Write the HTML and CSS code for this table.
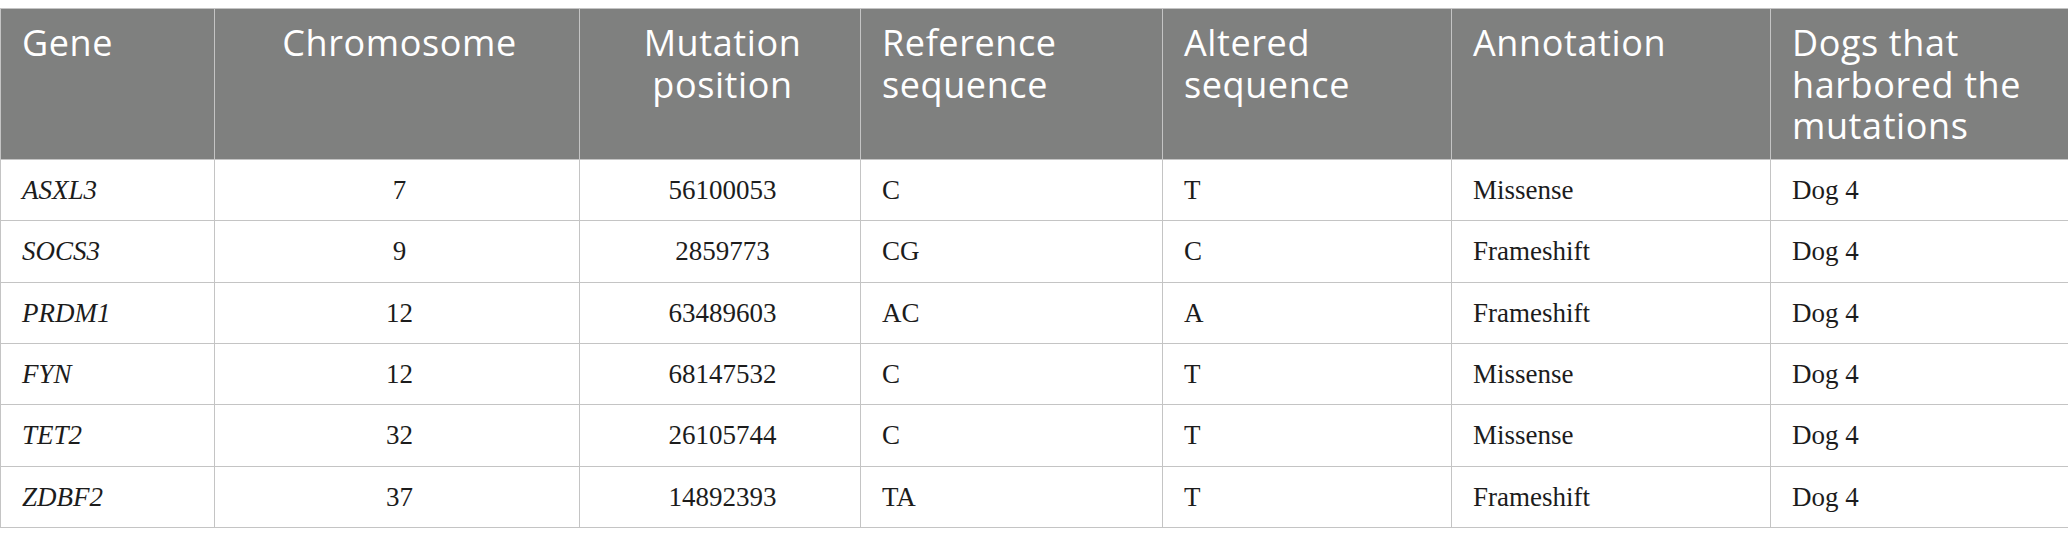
FILE: index.html
```html
<!DOCTYPE html>
<html lang="en">
<head>
<meta charset="utf-8">
<title>Mutations table</title>
<link rel="stylesheet" href="styles.css">
</head>
<body>
<table class="data-table">
  <colgroup>
    <col class="c-gene">
    <col class="c-chrom">
    <col class="c-pos">
    <col class="c-ref">
    <col class="c-alt">
    <col class="c-ann">
    <col class="c-dogs">
  </colgroup>
  <thead>
    <tr>
      <th>Gene</th>
      <th class="center">Chromosome</th>
      <th class="center">Mutation position</th>
      <th>Reference sequence</th>
      <th>Altered sequence</th>
      <th>Annotation</th>
      <th>Dogs that harbored the mutations</th>
    </tr>
  </thead>
  <tbody>
    <tr><td class="gene">ASXL3</td><td class="center">7</td><td class="center">56100053</td><td>C</td><td>T</td><td>Missense</td><td>Dog 4</td></tr>
    <tr><td class="gene">SOCS3</td><td class="center">9</td><td class="center">2859773</td><td>CG</td><td>C</td><td>Frameshift</td><td>Dog 4</td></tr>
    <tr><td class="gene">PRDM1</td><td class="center">12</td><td class="center">63489603</td><td>AC</td><td>A</td><td>Frameshift</td><td>Dog 4</td></tr>
    <tr><td class="gene">FYN</td><td class="center">12</td><td class="center">68147532</td><td>C</td><td>T</td><td>Missense</td><td>Dog 4</td></tr>
    <tr><td class="gene">TET2</td><td class="center">32</td><td class="center">26105744</td><td>C</td><td>T</td><td>Missense</td><td>Dog 4</td></tr>
    <tr><td class="gene">ZDBF2</td><td class="center">37</td><td class="center">14892393</td><td>TA</td><td>T</td><td>Frameshift</td><td>Dog 4</td></tr>
  </tbody>
</table>
</body>
</html>
```
FILE: styles.css
```css
html, body {
  background: #ffffff;
}
body {
  margin: 8px 0 0 0;
}
.data-table {
  width: 2068px;
  table-layout: fixed;
  border-collapse: collapse;
}
.c-gene { width: 214px; }
.c-chrom { width: 365px; }
.c-pos { width: 281px; }
.c-ref { width: 302px; }
.c-alt { width: 289px; }
.c-ann { width: 319px; }
.c-dogs { width: 298px; }

.data-table th,
.data-table td {
  border: 1px solid #c4c4c4;
  text-align: left;
  padding: 0 16px 0 21px;
}
.data-table th {
  background: #7f807f;
  color: #ffffff;
  font-family: "Open Sans", "Lato", sans-serif;
  font-weight: 400;
  font-size: 36px;
  letter-spacing: 0.6px;
  line-height: 41.5px;
  vertical-align: top;
  height: 151px;
  padding-top: 13px;
  box-sizing: border-box;
}
.data-table td {
  font-family: "Liberation Serif", "Times New Roman", serif;
  font-size: 27px;
  color: #1c1c1c;
  height: 61.33px;
  vertical-align: middle;
  line-height: 32px;
  box-sizing: border-box;
}
.data-table .center {
  text-align: center;
}
.data-table .gene {
  font-style: italic;
}
```
